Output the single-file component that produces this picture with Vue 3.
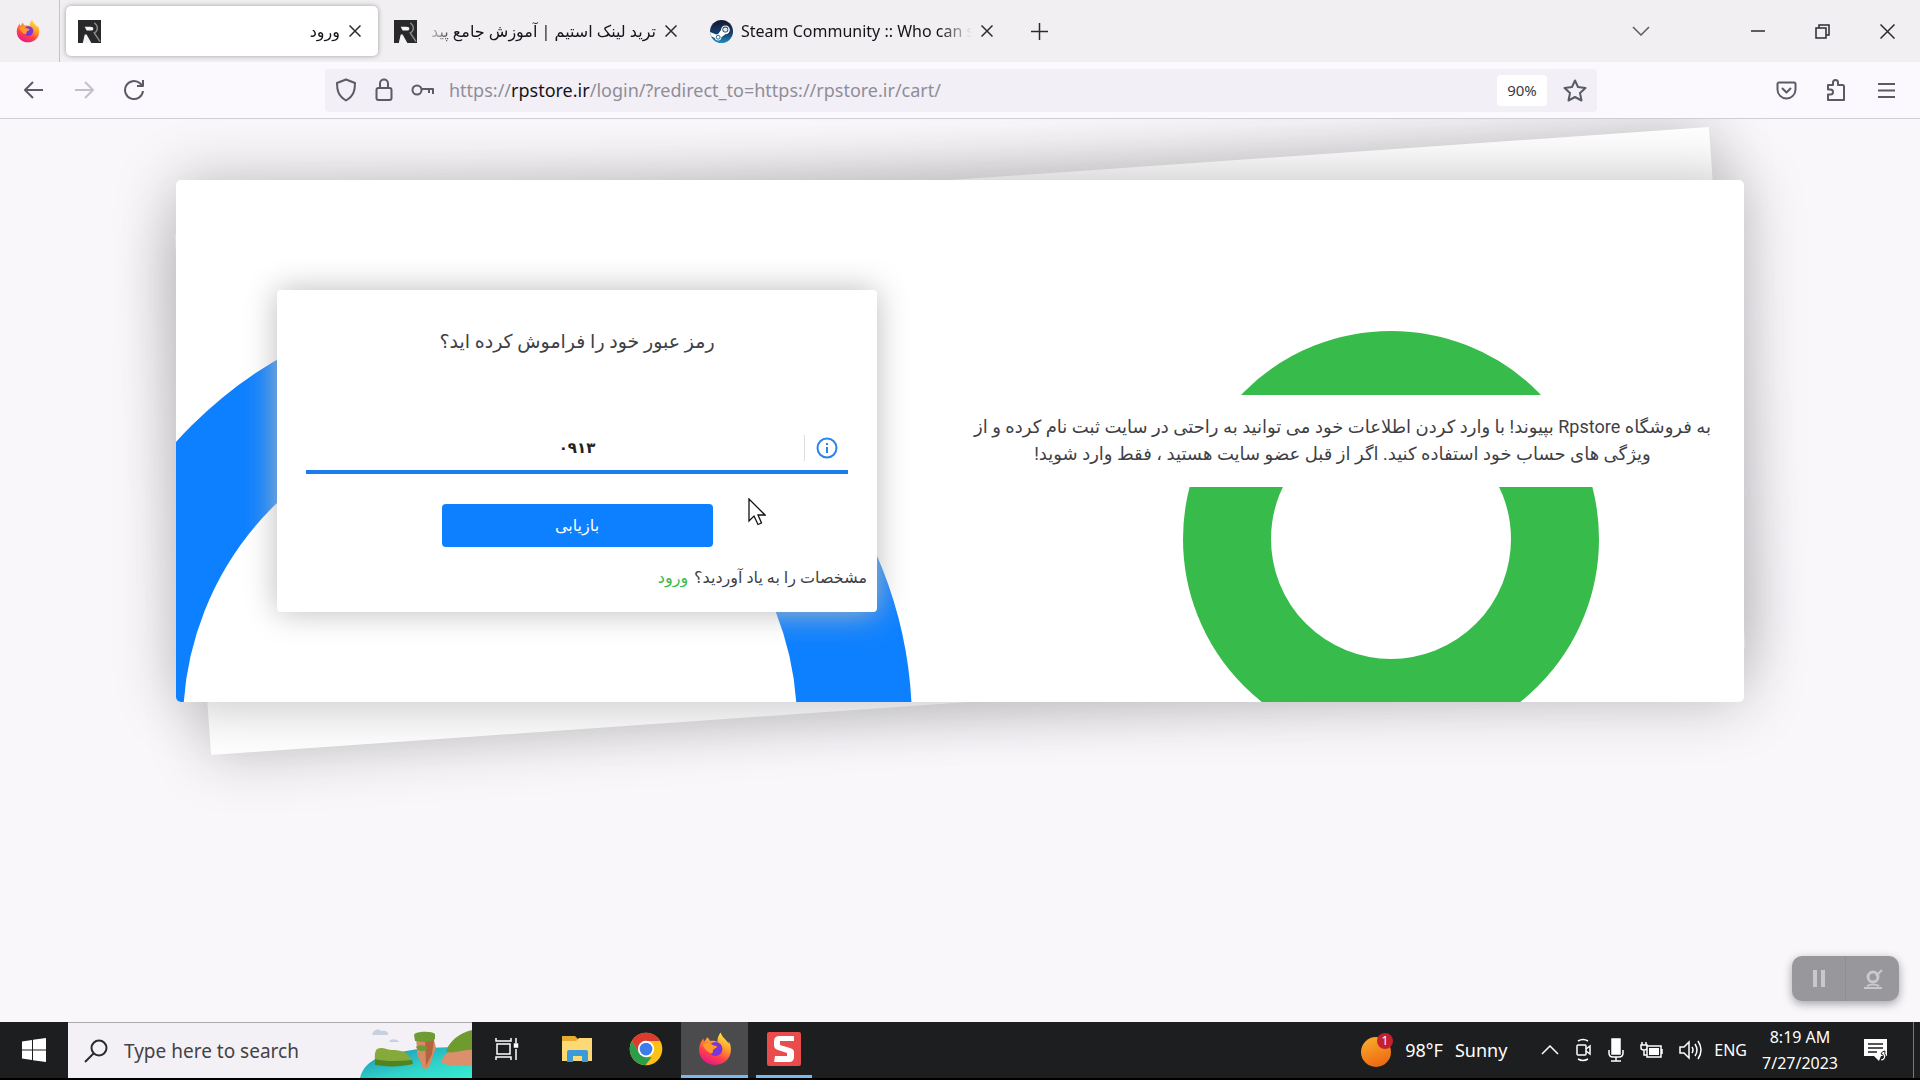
<script setup>
import { ref } from 'vue';

const tabs = ref([
  { id: 1, title: 'ورود', icon: 'rp', rtl: true },
  { id: 2, title: 'ترید لینک استیم | آموزش جامع پید', icon: 'rp', rtl: true },
  { id: 3, title: 'Steam Community :: Who can s', icon: 'steam', rtl: false },
]);
const activeTab = ref(1);
const phone = ref('۰۹۱۳');
const search = ref('');

function closeTab(id) {
  tabs.value = tabs.value.filter((tab) => tab.id !== id);
}
</script>

<template>
  <svg class="defs" width="0" height="0" aria-hidden="true">
    <defs>
      <linearGradient id="flame" x1="0.8" y1="0" x2="0.3" y2="1">
        <stop offset="0" stop-color="#fff04a" />
        <stop offset="0.4" stop-color="#ff9a2a" />
        <stop offset="0.7" stop-color="#ff3f4c" />
        <stop offset="1" stop-color="#e3168c" />
      </linearGradient>
      <linearGradient id="steamBg" x1="0" y1="0" x2="0" y2="1">
        <stop offset="0" stop-color="#14152e" />
        <stop offset="0.6" stop-color="#17406f" />
        <stop offset="1" stop-color="#1f8fbd" />
      </linearGradient>
      <linearGradient id="sun" x1="0" y1="0" x2="0.4" y2="1">
        <stop offset="0" stop-color="#fbb02c" />
        <stop offset="1" stop-color="#ee6c14" />
      </linearGradient>
      <linearGradient id="sea" x1="0" y1="0" x2="1" y2="1">
        <stop offset="0" stop-color="#1d86b4" />
        <stop offset="0.6" stop-color="#2fd3c8" />
        <stop offset="1" stop-color="#38ecd2" />
      </linearGradient>
      <symbol id="firefox" viewBox="0 0 32 32">
        <path d="M16 31C7.500 31 1 25 1 16.500 1 12 3 8.500 5 6l.6 3.200C7 7.500 8 6.500 8.300 5c1.500.8 2.500 2 3 3.500 2-.5 5-.5 7 1C18 6 19.500 2.500 21.500.500 22 4 25 6 27 8.500c.8 1 1.300 1.600 1.700 2.500l.3-2c1.500 2.500 2 5 2 7.500C31 25 24.500 31 16 31z" fill="url(#flame)" />
        <circle cx="16.500" cy="16" r="6.500" fill="#7a36d8" />
        <path d="M4.500 12c3-2.500 7-2 9 0 1.500 1.300 4 .6 4.500 1.500-.3 1.800-2.800 2.200-3.600 3.300-.7 1 .3 3-1.700 3.500C10 20 6 16 4.500 12z" fill="#ff9a2b" />
      </symbol>
      <symbol id="rp" viewBox="0 0 24 24">
        <rect width="24" height="24" fill="#29292b" />
        <path d="M7 7h6q3 0 3 2t-3 2H9z" fill="#f4f4f4" />
        <path d="M5 24l2-9h2l5 9z" fill="#f4f4f4" />
        <path d="M17 3q4 3 3 7-1 3-3 3.500l6 9" fill="none" stroke="#8b8b8d" stroke-width="1.500" />
      </symbol>
      <symbol id="steam" viewBox="0 0 24 24">
        <circle cx="12" cy="12" r="12" fill="url(#steamBg)" />
        <path d="M0 12.500 6.500 15.200a3.500 3.500 0 0 1 2-.5l3-4.300a4.600 4.600 0 1 1 4.600 4.500l-4.200 3a3.500 3.500 0 0 1-6.900.8L.8 16.700z" fill="#fff" />
        <circle cx="16" cy="10" r="3.100" fill="#17355e" />
        <circle cx="16" cy="10" r="2.300" fill="#dfe7f0" />
        <circle cx="8.500" cy="18" r="2" fill="none" stroke="#1b5c8f" />
      </symbol>
    </defs>
  </svg>

  <div class="screen">
    <!-- browser tabs -->
    <header class="tab-bar">
      <button class="pinned" aria-label="Firefox View">
        <svg width="24" height="24"><use href="#firefox" /></svg>
      </button>
      <nav class="tabs">
        <div
          v-for="tab in tabs"
          :key="tab.id"
          class="tab"
          :class="{ active: tab.id === activeTab, rtl: tab.rtl }"
          @click="activeTab = tab.id"
        >
          <svg width="23" height="23" class="tab-icon"><use :href="'#' + tab.icon" /></svg>
          <span class="tab-title">{{ tab.title }}</span>
          <button class="tab-close" aria-label="Close tab" @click.stop="closeTab(tab.id)">
            <svg width="12" height="12" viewBox="0 0 12 12"><path d="M0.500 0.500l11 11M11.500 0.500l-11 11" /></svg>
          </button>
        </div>
      </nav>
      <button class="new-tab" aria-label="New tab">
        <svg width="17" height="17" viewBox="0 0 17 17"><path d="M8.500 0v17M0 8.500h17" /></svg>
      </button>
      <div class="window-buttons">
        <button class="all-tabs" aria-label="List all tabs">
          <svg width="18" height="10" viewBox="0 0 18 10"><path d="M1 1l8 8 8-8" /></svg>
        </button>
        <button aria-label="Minimize">
          <svg width="14" height="14" viewBox="0 0 14 14"><path d="M0 7h14" /></svg>
        </button>
        <button aria-label="Restore">
          <svg width="15" height="15" viewBox="0 0 15 15"><path d="M1 4h10v10H1zM4 4V1h10v10h-3" /></svg>
        </button>
        <button aria-label="Close">
          <svg width="15" height="15" viewBox="0 0 15 15"><path d="M0.500 0.500l14 14M14.500 0.500l-14 14" /></svg>
        </button>
      </div>
    </header>

    <!-- address bar -->
    <div class="toolbar">
      <button aria-label="Back">
        <svg width="20" height="18" viewBox="0 0 20 18"><path d="M19 9H1M9 1L1 9l8 8" /></svg>
      </button>
      <button class="disabled" aria-label="Forward">
        <svg width="20" height="18" viewBox="0 0 20 18"><path d="M1 9h18M11 1l8 8-8 8" /></svg>
      </button>
      <button aria-label="Reload">
        <svg width="22" height="22" viewBox="0 0 22 22"><path d="M20 12a9 9 0 1 1-3-7.700l2 2M20 1v6h-6" /></svg>
      </button>
      <div class="url-bar">
        <div class="url-icons">
          <svg width="22" height="24" viewBox="0 0 22 24"><path d="M11 1.500l9 3.500c0 7-1 13-9 17.500C3 18 2 12 2 5z" /></svg>
          <svg width="18" height="24" viewBox="0 0 18 24"><rect x="1.500" y="10" width="15" height="12" rx="2" /><path d="M5 10V5.500a4 4 0 0 1 8 0V10" /></svg>
          <svg width="24" height="14" viewBox="0 0 24 14"><circle cx="6" cy="7" r="4.500" /><path d="M10.500 6H22v5M18 6v4" /></svg>
        </div>
        <div class="url" role="textbox" aria-label="Address">https://<b>rpstore.ir</b>/login/?redirect_to=https://rpstore.ir/cart/</div>
        <button class="zoom">90%</button>
        <button class="star" aria-label="Bookmark">
          <svg width="24" height="23" viewBox="0 0 24 23"><path d="M12 1.500l3 6.500 7.500 1-5.500 5 1.500 7.500L12 18l-6.500 3.500L7 14 1.500 9 9 8z" /></svg>
        </button>
      </div>
      <button aria-label="Save to Pocket">
        <svg width="21" height="19" viewBox="0 0 21 19"><path d="M3 1.500h15a1.500 1.500 0 0 1 1.500 1.500v5.500a9 9 0 0 1-18 0V3A1.500 1.500 0 0 1 3 1.500zM6 7l4.500 4.500L15 7" /></svg>
      </button>
      <button aria-label="Extensions">
        <svg width="20" height="24" viewBox="0 0 20 24"><path d="M2 22V16.500h2.500a2.500 2.500 0 0 0 0-5H2V7h5V4.500a2.500 2.500 0 0 1 5 0V7h4.500A1.500 1.500 0 0 1 18 8.500V22z" /></svg>
      </button>
      <button aria-label="Menu">
        <svg width="17" height="15" viewBox="0 0 17 15"><path d="M0 1h17M0 7.500h17M0 14h17" /></svg>
      </button>
    </div>

    <!-- login page -->
    <main class="page" dir="rtl">
      <div class="card-wrap">
        <div class="card">
          <section class="intro">
            <p>
              به فروشگاه Rpstore بپیوند! با وارد کردن اطلاعات خود می توانید به راحتی در سایت ثبت نام کرده و از<br />
              ویژگی های حساب خود استفاده کنید. اگر از قبل عضو سایت هستید ، فقط وارد شوید!
            </p>
          </section>
          <section class="form-side">
            <form class="form" @submit.prevent>
              <h1 id="form-title">رمز عبور خود را فراموش کرده اید؟</h1>
              <div class="field">
                <span class="field-icon">
                  <svg width="22" height="22" viewBox="0 0 22 22">
                    <circle cx="11" cy="11" r="9.500" />
                    <path d="M11 10v6M11 6v2" />
                  </svg>
                </span>
                <input v-model="phone" type="text" aria-labelledby="form-title" />
              </div>
              <button class="submit" type="submit">بازیابی</button>
              <p class="switch">مشخصات را به یاد آوردید؟ <a href="#">ورود</a></p>
            </form>
          </section>
        </div>
      </div>
    </main>

    <!-- taskbar -->
    <footer class="taskbar">
      <button class="start" aria-label="Start">
        <svg width="24" height="24" viewBox="0 0 24 24"><path d="M0 3.500L10 2v9.500H0zM11 1.800L24 0v11.500H11zM0 12.500h10V22L0 20.500zM11 12.500h13V24l-13-1.800z" fill="#fff" /></svg>
      </button>
      <label class="search">
        <svg class="search-icon" width="24" height="24" viewBox="0 0 24 24"><circle cx="15" cy="9" r="7.500" /><path d="M9.500 14.500L1 23" /></svg>
        <input v-model="search" type="text" placeholder="Type here to search" />
        <svg class="island" width="112" height="55" viewBox="0 0 112 55">
          <path d="M0 55C4 40 16 34 30 32 50 25 90 22 112 26v29z" fill="url(#sea)" />
          <path d="M12 12c1-5 6-7 9-4 4-1 8 1 7 4zM29 19c2-4 8-3 10 0z" fill="#c5d1df" />
          <path d="M15 41c0-6-1-12 2-15 5-3 10 1 15 1 6 0 12 1 15 4 4 3 3 6 6 10-12 3-26 3-38 0z" fill="#86a93b" />
          <path d="M15 36c12 3 25 2 37 1l1 4c-12 3-26 3-38 1z" fill="#4f8420" />
          <path d="M56 14l17-1 3 12c-4 8-4 14-7 19-2 3-7 2-7-1 0-5-6-8-5-16z" fill="#d78a66" />
          <path d="M65 16l9 1-2 14-6 12z" fill="#b2633f" />
          <path d="M54 12c1-4 18-4 21-1v5c-5 4-13 3-20 2zM56 24c4-3 9-2 11 1 1 3-6 4-9 2z" fill="#6f9b35" />
          <path d="M81 40c2-9 10-16 31-17v20c-12 0-22 0-31-3z" fill="#dc8f6c" />
          <path d="M86 29c2-9 12-19 26-22v20c-8-1-16 4-26 2z" fill="#6d9b2d" />
        </svg>
      </label>
      <div class="apps">
        <button class="task-view" aria-label="Task View">
          <svg width="24" height="24" viewBox="0 0 24 24" fill="none" stroke="#fff" stroke-width="1.500"><path d="M1 1v3h15V1M1 23v-3h15v3M2 7h13v10H2zM21 1v5M21 12v11" /><path d="M19.500 7h3v3h-3z" fill="#fff" /></svg>
        </button>
        <button aria-label="File Explorer">
          <svg width="32" height="28" viewBox="0 0 32 28"><path d="M1 1h13l3 3h14v22H1z" fill="#e6ac2f" /><path d="M1 6h14l3-3h13v23H1z" fill="#fcd975" /><path d="M6 27V17q0-2 2-2h17q2 0 2 2v10h-6v-6h-9v6z" fill="#3a9bd8" /></svg>
        </button>
        <button aria-label="Chrome">
          <svg width="34" height="34" viewBox="0 0 48 48"><circle cx="24" cy="24" r="23" fill="#fbc116" /><path d="M4 12.600A23 23 0 0 1 44 12.600H24L14 30z" fill="#dc3b30" /><path d="M4 12.600 14.500 30 24 35.500h8L23 47A23 23 0 0 1 4 12.600z" fill="#2c9e4b" /><circle cx="24" cy="24" r="11.500" fill="#fff" /><circle cx="24" cy="24" r="9" fill="#3b7ded" /></svg>
        </button>
        <button class="open focused" aria-label="Firefox">
          <svg width="34" height="34"><use href="#firefox" /></svg>
        </button>
        <button class="open behind" aria-label="Snagit">
          <svg width="34" height="34" viewBox="0 0 34 34"><rect width="34" height="34" rx="2" fill="#ea4b4b" /><path d="M27 9V4H13Q7 4 7 9v4q0 4 4 5l9 3v3H8l-1 6h15q5 0 5-5v-5q0-3-4-4l-10-3V9z" fill="#fff" /></svg>
        </button>
      </div>
      <div class="tray">
        <button class="weather">
          <svg width="32" height="36" viewBox="0 0 32 36"><circle cx="15" cy="20" r="15" fill="url(#sun)" /><circle cx="24" cy="9" r="8" fill="#c4202f" /><text x="24" y="13" text-anchor="middle" font-size="12" fill="#fff">1</text></svg>
          <span>98°F</span><span>Sunny</span>
        </button>
        <div class="tray-icons">
          <svg width="18" height="10" viewBox="0 0 18 10"><path d="M1 9l8-8 8 8" /></svg>
          <svg width="18" height="24" viewBox="0 0 18 24"><rect x="3" y="7" width="9" height="10" rx="1" /><path d="M12 11l4-3v8l-4-3M4 3q5-3 10 0M4 21q5 3 10 0" /></svg>
          <svg width="18" height="24" viewBox="0 0 18 24"><rect x="5" y="1" width="8" height="15" fill="#fff" /><path d="M2 12v3q0 4 4 4h6q4 0 4-4v-3M9 19v4M4 23h10" /></svg>
          <svg width="24" height="18" viewBox="0 0 24 18"><path d="M7 5h14v11H7zM22 8v5M2 1v3M6 1v3M1 4h6v3q0 2-3 2t-3-2zM4 9v5h3" /><path d="M9 7h10v7H9z" fill="#fff" stroke="none" /></svg>
          <svg width="24" height="20" viewBox="0 0 24 20"><path d="M1 7h4l5-5v16l-5-5H1zM13 7q2 3 0 6M16 4q4 6 0 12M19 1q6 9 0 18" /></svg>
        </div>
        <span class="lang">ENG</span>
        <div class="clock"><span>8:19 AM</span><span>7/27/2023</span></div>
        <button class="notice" aria-label="Notifications">
          <svg width="24" height="24" viewBox="0 0 24 24"><path d="M0 1h23v17h-6l-2 5-5-5H0z" fill="#fff" /><path d="M4 6h15M4 10h15M4 14h9" stroke="#1d1d1f" stroke-width="1.500" /><path d="M17 21a2.500 2.500 0 1 0 0-5q1-3 4-3-1 3 1 5-1 5-5 5" fill="#fff" stroke="#1d1d1f" /></svg>
        </button>
      </div>
    </footer>

    <!-- recorder controls floating over the desktop -->
    <div class="recorder">
      <button aria-label="Pause">
        <svg width="14" height="17" viewBox="0 0 14 17"><path d="M3 0v17M11 0v17" stroke-width="4" /></svg>
      </button>
      <button aria-label="Webcam off">
        <svg width="20" height="20" viewBox="0 0 20 20"><circle cx="10" cy="8" r="5" stroke-width="3" /><path d="M1 19h18M4 17q6-3 12 0M13 7L19 1" stroke-width="2" /></svg>
      </button>
    </div>

    <svg class="cursor" width="18" height="28" viewBox="0 0 18 28"><path d="M1 1v22l5-5 4 8.500 3.500-1.500-3.500-8h7z" fill="#fff" stroke="#111" stroke-width="1.300" /></svg>
  </div>
</template>

<style>
body {
  margin: 0;
}
</style>

<style scoped>
*,
*::before,
*::after {
  box-sizing: border-box;
}
.defs {
  position: absolute;
}
.screen {
  position: relative;
  min-height: 100vh;
  display: flex;
  flex-direction: column;
  overflow: hidden;
  background: #f9f7fa;
  font-family: "Noto Sans", "DejaVu Sans", sans-serif;
  font-size: 16px;
}
button {
  display: flex;
  align-items: center;
  justify-content: center;
  padding: 0;
  border: none;
  background: none;
  font-family: inherit;
}
svg {
  flex-shrink: 0;
}

/* tab bar */
.tab-bar {
  display: flex;
  align-items: center;
  height: 62px;
  background: #f1eff2;
}
.tab-bar button path {
  fill: none;
  stroke: #2b2a33;
  stroke-width: 1.5;
}
.pinned {
  width: 60px;
  height: 100%;
  padding-right: 4px;
  border-right: 1px solid #c4c3c6;
}
.tabs {
  display: flex;
  gap: 4px;
  margin-left: 6px;
}
.tab {
  display: flex;
  align-items: center;
  width: 312px;
  height: 50px;
  padding: 0 12px;
  border-radius: 5px;
  color: #15141a;
}
.tab.active {
  background: #fff;
  box-shadow: 0 0 5px rgba(0, 0, 0, 0.35);
}
.tab-title {
  flex: 1;
  margin: 0 4px 0 8px;
  overflow: hidden;
  white-space: nowrap;
  mask-image: linear-gradient(to left, transparent, #000 32px);
}
.rtl .tab-title {
  direction: rtl;
  mask-image: linear-gradient(to right, transparent, #000 32px);
}
.tab-close {
  width: 22px;
  height: 22px;
}
.new-tab {
  width: 50px;
  height: 50px;
  margin-left: 4px;
}
.window-buttons {
  display: flex;
  margin-left: auto;
  height: 100%;
}
.window-buttons button {
  width: 65px;
}
.window-buttons .all-tabs {
  margin-right: 52px;
}
.window-buttons .all-tabs path {
  stroke: #5b5b66;
}

/* toolbar */
.toolbar {
  display: flex;
  align-items: center;
  height: 57px;
  padding: 0 9px;
  background: #fbf9fe;
  border-bottom: 1px solid #cfced1;
}
.toolbar button {
  width: 50px;
  height: 44px;
}
.toolbar svg {
  fill: none;
  stroke: #5b5b66;
  stroke-width: 2;
  stroke-linejoin: round;
}
.toolbar .disabled {
  opacity: 0.35;
}
.url-bar {
  flex: 1;
  display: flex;
  align-items: center;
  height: 43px;
  margin: 0 164px 0 166px;
  padding-left: 10px;
  border-radius: 4px;
  background: #f2f0f6;
}
.url-icons {
  display: flex;
  align-items: center;
  gap: 18px;
}
.url {
  flex: 1;
  margin-left: 14px;
  color: #8f8d98;
  font-size: 18px;
}
.url b {
  font-weight: 400;
  color: #15141a;
}
.toolbar .zoom {
  height: 31px;
  border-radius: 4px;
  background: #fff;
  color: #3a3944;
  font-size: 15px;
}
.toolbar .star {
  width: 44px;
  margin: 0 0 0 6px;
}

/* page */
.page {
  flex: 1;
  padding: 61px 176px;
  overflow: hidden;
  font-family: Roboto, "DejaVu Sans", sans-serif;
  color: #3f3f46;
}
.card-wrap {
  position: relative;
}
.card-wrap::before {
  content: "";
  position: absolute;
  inset: 0 15px;
  background: #fff;
  box-shadow: 0 0 60px #bdbbbe;
  transform: rotate(-4deg);
}
.card-wrap::after {
  content: "";
  position: absolute;
  inset: 0;
  border-radius: 5px;
  box-shadow: 0 0 60px #bdbbbe;
  pointer-events: none;
}
.card {
  position: relative;
  display: grid;
  grid-template-columns: 1fr 1fr;
  overflow: hidden;
  border-radius: 5px;
  background: #fff;
}
.intro,
.form-side {
  position: relative;
}
.intro {
  display: flex;
  align-items: center;
}
.intro::before {
  content: "";
  position: absolute;
  top: 151px;
  right: 145px;
  width: 416px;
  height: 416px;
  border: 88px solid #37bb4b;
  border-radius: 50%;
}
.intro p {
  position: relative;
  width: 100%;
  margin: 0;
  padding: 18px 32px 20px 13px;
  background: #fff;
  text-align: center;
  white-space: nowrap;
  font-size: 18px;
  line-height: 27px;
}
.form-side {
  padding: 110px 83px 90px 101px;
  direction: ltr;
}
.form-side::before {
  content: "";
  position: absolute;
  top: 122px;
  left: -108px;
  width: 844px;
  height: 844px;
  border: 115px solid #0d80ff;
  border-radius: 50%;
}
.form {
  position: relative;
  display: flex;
  flex-direction: column;
  direction: rtl;
  padding: 36px 29px 19px;
  border-radius: 4px;
  background: #fff;
  box-shadow: 0 0 32px #bbb;
}
h1 {
  margin: 0;
  text-align: center;
  font-size: 19px;
  font-weight: 400;
  line-height: 32px;
}
.field {
  display: flex;
  align-items: center;
  height: 48px;
  margin-top: 68px;
  border-bottom: 4px solid #1c7cec;
}
.field-icon {
  display: flex;
  align-items: center;
  justify-content: center;
  width: 44px;
  height: 26px;
  border-left: 1px solid #dddde2;
}
.field-icon svg {
  fill: none;
  stroke: #2c82ea;
  stroke-width: 2;
}
.field input {
  flex: 1;
  min-width: 0;
  padding: 0 0 0 44px;
  border: none;
  outline: none;
  background: none;
  text-align: center;
  font-family: inherit;
  font-size: 15px;
  font-weight: 700;
  color: #222;
}
.submit {
  width: 50%;
  height: 43px;
  margin: 30px auto 0;
  border-radius: 4px;
  background: #0d80ff;
  color: #fff;
  font-size: 16px;
}
.switch {
  margin: 16px -19px 0;
  font-size: 16px;
  line-height: 30px;
}
.switch a {
  margin-right: 2px;
  color: #37bb4b;
  text-decoration: none;
}

/* taskbar */
.taskbar {
  display: flex;
  height: 58px;
  background: #1d1e20;
  border-bottom: 2px solid #000;
  color: #fff;
}
.start {
  width: 68px;
}
.search {
  display: flex;
  align-items: center;
  width: 404px;
  padding-left: 16px;
  background: #f3f1f5;
  border-top: 1px solid #aaa9ad;
}
.search-icon {
  fill: none;
  stroke: #2b2b2b;
  stroke-width: 2;
}
.search input {
  flex: 1;
  min-width: 0;
  padding: 0 0 0 16px;
  border: none;
  outline: none;
  background: none;
  font-family: inherit;
  font-size: 19px;
}
.search input::placeholder {
  color: #434246;
  opacity: 1;
}
.apps {
  display: flex;
  gap: 2px;
}
.apps button {
  width: 67px;
  border-bottom: 3px solid transparent;
}
.apps .task-view {
  width: 69px;
}
.apps .open {
  border-bottom-color: #7ab8ee;
}
.apps .focused {
  background: #4b4b4d;
}
.apps .behind {
  width: 56px;
  margin-left: 6px;
}
.tray {
  display: flex;
  align-items: center;
  margin-left: auto;
  margin-right: 6px;
  border-right: 1px solid #77777a;
  font-size: 16px;
}
.weather {
  gap: 12px;
  margin-right: 34px;
  color: #fff;
  font-size: 18px;
}
.tray-icons {
  display: flex;
  align-items: center;
  gap: 15px;
}
.tray-icons svg {
  fill: none;
  stroke: #fff;
  stroke-width: 1.5;
}
.lang {
  margin-left: 11px;
}
.clock {
  display: flex;
  flex-direction: column;
  align-items: center;
  margin-left: 15px;
  line-height: 26px;
}
.notice {
  width: 75px;
  height: 100%;
}

.recorder {
  position: absolute;
  right: 21px;
  bottom: 79px;
  display: flex;
  width: 107px;
  height: 45px;
  border-radius: 10px;
  background: #98979b;
  box-shadow: 0 3px 10px rgba(0, 0, 0, 0.35);
}
.recorder button {
  flex: 1;
}
.recorder button + button {
  border-left: 1px solid #8f8e92;
}
.recorder svg {
  fill: none;
  stroke: #c9c8cc;
}
.cursor {
  position: absolute;
  top: 498px;
  left: 748px;
}
</style>
